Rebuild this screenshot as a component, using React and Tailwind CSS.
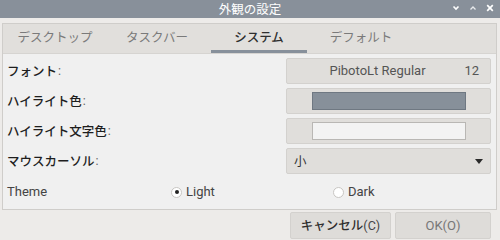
import React from 'react'

const JP = { fontFamily: '"Noto Sans CJK JP", "Noto Sans", sans-serif' }

const tabs = ['デスクトップ', 'タスクバー', 'システム', 'デフォルト']

const Label = ({ children }) => (
    <div className="pl-[4px] text-[12.5px] font-medium text-[#1e1e1e] flex items-center">
        {children}<span className="font-['Roboto'] font-normal text-[#666] ml-[1px]">:</span>
    </div>
)

const Field = ({ children, className = '' }) => (
    <div className={`h-[26px] w-[205px] rounded-[2px] border border-[#d3d1ce] bg-[#e0dedb] flex items-center ${className}`}>
        {children}
    </div>
)

const Radio = ({ checked, label }) => (
    <div className="flex items-center gap-[4px]">
        <div className="w-[11px] h-[11px] rounded-full border border-[#c8c6c3] bg-white flex items-center justify-center">
            {checked && <div className="w-[4px] h-[4px] rounded-full bg-[#222]" />}
        </div>
        <span className="text-[13px] text-[#444] font-['Roboto']">{label}</span>
    </div>
)

export default function App() {
    return (
        <div className="w-[500px] h-[240px] bg-[#edebe9] flex flex-col overflow-hidden" style={JP}>
            {/* title bar */}
            <div className="h-[18px] bg-[#88909a] relative flex items-center justify-center">
                <span className="text-white text-[12.5px] leading-none">外観の設定</span>
                <div className="absolute right-[6px] top-[4px] flex items-center gap-[9px]">
                    <svg width="8" height="8" viewBox="0 0 8 8"><path d="M1.5 2.5 L4 5 L6.5 2.5" stroke="#fff" strokeWidth="1.6" fill="none" /></svg>
                    <svg width="8" height="8" viewBox="0 0 8 8"><path d="M1.5 5.5 L4 3 L6.5 5.5" stroke="#e8eaec" strokeWidth="1.3" fill="none" /></svg>
                    <svg width="8" height="8" viewBox="0 0 8 8"><path d="M1.2 1.2 L6.8 6.8 M6.8 1.2 L1.2 6.8" stroke="#fff" strokeWidth="1.7" /></svg>
                </div>
            </div>

            {/* frame */}
            <div className="mx-[2px] mt-[5px] border border-[#cfcdca] bg-[#f0f0f0] w-[495px]">
                <div className="h-[30px] bg-[#e1dfdc] border-b border-[#d6d4d1] flex pl-[1px]">
                    {tabs.map((t, i) => (
                        <div key={t} className="w-[102px] flex flex-col">
                            <div className={`flex-1 flex items-center justify-center text-[12.5px] ${i === 2 ? 'text-[#2e2e2e] font-medium' : 'text-[#7a7a7a]'}`}>{t}</div>
                            <div className={`mx-[3px] h-[3px] ${i === 2 ? 'bg-[#87909b]' : ''}`} />
                        </div>
                    ))}
                </div>

                <div className="pt-[4px] pb-[3px] flex flex-col gap-[4px]">
                    <div className="flex justify-between pr-[5px]">
                        <Label>フォント</Label>
                        <Field className="justify-center relative font-['Roboto'] text-[13px] text-[#555]">
                            <span className="ml-[-22px]">PibotoLt Regular</span>
                            <span className="absolute right-[11px]">12</span>
                        </Field>
                    </div>
                    <div className="flex justify-between pr-[5px]">
                        <Label>ハイライト色</Label>
                        <Field className="justify-center">
                            <div className="w-[154px] h-[18px] bg-[#87909a] border border-[#6f7882]" />
                        </Field>
                    </div>
                    <div className="flex justify-between pr-[5px]">
                        <Label>ハイライト文字色</Label>
                        <Field className="justify-center">
                            <div className="w-[154px] h-[18px] bg-[#f3f3f3] border border-[#b9b7b4]" />
                        </Field>
                    </div>
                    <div className="flex justify-between pr-[5px]">
                        <Label>マウスカーソル</Label>
                        <Field className="justify-between px-[7px] text-[12.5px] text-[#333]">
                            <span>小</span>
                            <svg width="8" height="5" viewBox="0 0 8 5"><path d="M0 0 H8 L4 5 Z" fill="#2a2a2a" /></svg>
                        </Field>
                    </div>
                    <div className="h-[28px] flex items-center pl-[4px]">
                        <span className="w-[164px] text-[13px] text-[#444] font-['Roboto']">Theme</span>
                        <div className="w-[162px]"><Radio checked label="Light" /></div>
                        <Radio label="Dark" />
                    </div>
                </div>
            </div>

            {/* buttons */}
            <div className="flex justify-end gap-[4px] pr-[9px] pt-[2px]">
                <button className="w-[101px] h-[27px] rounded-[2px] border border-[#d3d1ce] bg-[#dedcd9] text-[12.5px] font-medium text-[#2e2e2e]">
                    キャンセル<span className="font-['Roboto'] font-normal text-[#444]">(C)</span>
                </button>
                <button className="w-[96px] h-[27px] rounded-[2px] border border-[#d3d1ce] bg-[#dedcd9] text-[13px] font-['Roboto'] text-[#777]">
                    OK(O)
                </button>
            </div>
        </div>
    )
}
